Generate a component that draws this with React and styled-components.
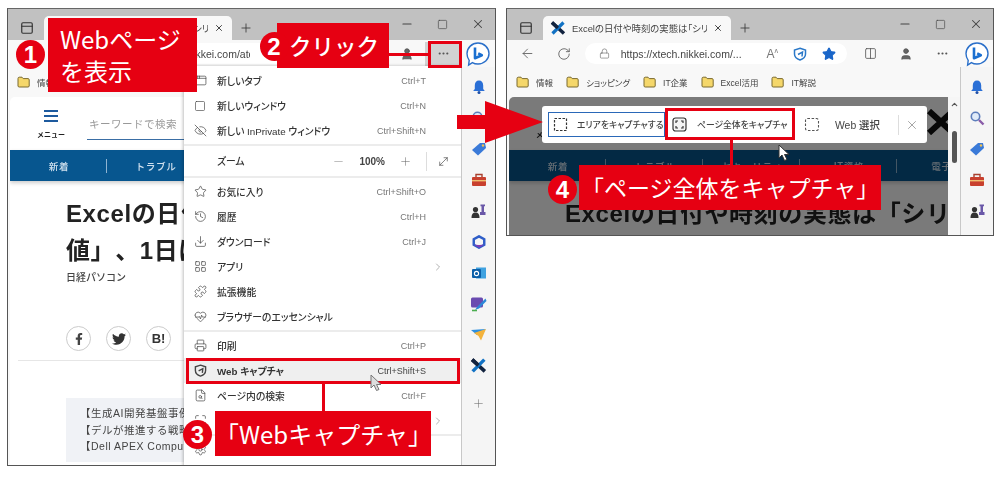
import React from "react";
import styled, { createGlobalStyle } from "styled-components";
import {
	ArrowLeft, RotateCw, Lock, Star, Minus, Square, X, Plus, PanelTop, Columns2, User, MoreHorizontal,
	AppWindow, Maximize, EyeOff, History, Download, LayoutGrid, Puzzle, HeartPulse, Printer, FileSearch, Settings,
	ChevronRight, MoveDiagonal, ChevronUp,
} from "lucide-react";
import { FaFacebookF, FaTwitter } from "react-icons/fa";

const GlobalStyle = createGlobalStyle`
	html, body { margin: 0; padding: 0; background: #fff; }
	* { box-sizing: border-box; }
	body {
		font-family: "Liberation Sans", "Noto Sans CJK JP", sans-serif;
		text-spacing-trim: space-all;
	}
`;

const RED = "#e60012";
const JP = `"Noto Sans CJK JP", "Liberation Sans", sans-serif`;
const LATIN_JP = `"Liberation Sans", "Noto Sans CJK JP", sans-serif`;

const Figure = styled.div`
	position: relative;
	width: 1000px;
	height: 478px;
	display: flex;
	align-items: flex-start;
	gap: 10px;
	padding: 8px 6px 0 7px;
	overflow: hidden;
`;

const Win = styled.div`
	width: ${(p) => p.$w}px;
	height: ${(p) => p.$h}px;
	border: 1px solid #555;
	border-top-color: #666;
	background: #f8f8f8;
	display: flex;
	flex-direction: column;
	overflow: hidden;
	position: relative;
	filter: blur(0.35px);
`;

const TitleBar = styled.div`
	height: 31px;
	flex: none;
	background: #c1c1c1;
	display: flex;
	align-items: flex-end;
	padding-left: 6px;
	color: #333;
`;

const TabToggle = styled.div`
	width: 30px;
	height: 24px;
	padding-right: 5px;
	display: flex;
	align-items: center;
	justify-content: center;
`;

const Tab = styled.div`
	width: 188px;
	height: 24px;
	background: #f8f8f8;
	border-radius: 5px 5px 0 0;
	display: flex;
	align-items: center;
	padding: 0 8px 0 7px;
	gap: 6px;
`;

const TabTitle = styled.span`
	flex: 1;
	font: 400 9.4px ${LATIN_JP};
	font-feature-settings: "palt";
	color: #444;
	white-space: nowrap;
	overflow: hidden;
`;

const NewTab = styled.div`
	width: 28px;
	height: 24px;
	display: flex;
	align-items: center;
	justify-content: center;
`;

const Controls = styled.div`
	margin-left: auto;
	height: 31px;
	display: flex;
	align-items: center;
	padding-right: 10px;
	padding-bottom: 1px;
	gap: 23px;
	color: #444;
`;

const Main = styled.div`
	flex: 1;
	min-height: 0;
	display: flex;
`;

const Column = styled.div`
	width: 453px;
	flex: none;
	display: flex;
	flex-direction: column;
	min-height: 0;
`;

const AddressRow = styled.div`
	height: 27px;
	flex: none;
	display: flex;
	align-items: center;
	padding-left: 12px;
	color: #555;
`;

const NavIcon = styled.div`
	width: 18px;
	display: flex;
	justify-content: center;
	margin-right: ${(p) => p.$gap || 0}px;
`;

const Pill = styled.div`
	width: 264px;
	height: 21px;
	margin-left: 12px;
	background: #fff;
	border-radius: 11px;
	display: flex;
	align-items: center;
	padding-left: 14px;
	gap: 11px;
`;

const Url = styled.span`
	font: 400 10.5px "Liberation Sans", sans-serif;
	color: #444;
	white-space: nowrap;
	margin-left: ${(p) => p.$offset || 0}px;
	width: ${(p) => p.$width}px;
	overflow: hidden;
	flex: none;
`;

const PillTools = styled.div`
	margin-left: auto;
	display: flex;
	align-items: center;
	gap: 15px;
	padding-right: 11px;
`;

const ReadAloud = styled.span`
	font: 400 12px "Liberation Sans", sans-serif;
	color: #777;
	sup { font-size: 7px; }
`;

const RowTools = styled.div`
	margin-left: 5px;
	display: flex;
	align-items: center;
`;

const ToolSlot = styled.div`
	width: 36px;
	height: 24px;
	display: flex;
	align-items: center;
	justify-content: center;
	background: ${(p) => (p.$active ? "#d2d2d2" : "transparent")};
`;

const Bookmarks = styled.div`
	height: 30px;
	flex: none;
	display: flex;
	align-items: center;
	padding-left: 9px;
	font: 400 8.5px ${LATIN_JP};
	font-feature-settings: "palt";
	color: #444;
`;

const Bookmark = styled.span`
	display: flex;
	align-items: center;
	gap: 7px;
	margin-right: 13px;
	white-space: nowrap;
`;

const PageRow = styled.div`
	flex: 1;
	min-height: 0;
	display: flex;
	padding-left: 2px;
`;

const PageView = styled.div`
	flex: 1;
	min-width: 0;
	position: relative;
	background: #fff;
	border-radius: 5px 0 0 0;
	overflow: hidden;
`;

const Dim = styled.div`
	position: absolute;
	inset: 0;
	background: rgba(0, 0, 0, 0.52);
`;

const Scrollbar = styled.div`
	width: 12px;
	flex: none;
	background: #f6f6f6;
	display: flex;
	flex-direction: column;
	align-items: center;
	padding-top: 3px;
	color: #555;
`;

const Thumb = styled.div`
	width: 5px;
	height: 32px;
	margin-top: 22px;
	background: #555;
	border-radius: 3px;
`;

const SiteHeader = styled.div`
	height: 53px;
	display: flex;
	position: relative;
	padding-left: 29px;
`;

const MenuButton = styled.div`
	width: 24px;
	padding-top: 13px;
	display: flex;
	flex-direction: column;
	align-items: center;
	gap: 3px;
	font: 700 7px ${JP};
	color: #222;
	white-space: nowrap;
	span {
		display: block;
		width: 14px;
		height: 2px;
		background: #1d5a9e;
	}
	em { font-style: normal; margin-top: 4px; }
`;

const SearchField = styled.div`
	margin: 18px 0 0 24px;
	width: 300px;
	height: 25px;
	border-bottom: 1.5px solid #3a6ea5;
	padding-left: 2px;
	font: 400 10.5px ${JP};
	letter-spacing: 0.5px;
	color: #999;
	line-height: 18px;
`;

const SiteLogo = styled.svg`
	position: absolute;
	right: -7px;
	top: 12px;
`;

const SiteNav = styled.div`
	height: 31px;
	background: #07568f;
	display: flex;
	align-items: center;
	box-shadow: 0 2px 4px rgba(0, 0, 0, 0.2);
	position: relative;
`;

const SiteNavItem = styled.div`
	width: 97px;
	flex: none;
	text-align: center;
	font: 500 9.6px ${JP};
	letter-spacing: 0.6px;
	color: #cfe0ee;
	border-right: 1px solid #8fb4d2;
	line-height: 14px;
	padding-left: 2px;
	&:last-child { border-right: 0; }
`;

const Article = styled.div`
	padding: 14px 0 0 56px;
`;

const Headline = styled.h1`
	margin: 0;
	font: 700 24px/37px ${LATIN_JP};
	letter-spacing: 0.6px;
	color: #222;
	white-space: nowrap;
`;

const Byline = styled.div`
	margin-top: 1px;
	font: 500 10px/14px ${JP};
	color: #444;
`;

const ShareRow = styled.div`
	margin-top: 42px;
	display: flex;
	gap: 15px;
`;

const ShareButton = styled.div`
	width: 25px;
	height: 25px;
	border-radius: 50%;
	border: 1px solid #ccc;
	display: flex;
	align-items: center;
	justify-content: center;
	font: 700 13px "Liberation Sans", sans-serif;
	color: #333;
`;

const ArticleRule = styled.div`
	margin: 9px 0 0 -48px;
	height: 1px;
	width: 400px;
	background: #e6e6e6;
`;

const Notice = styled.div`
	margin-top: 37px;
	width: 300px;
	height: 64px;
	background: #f0f2f6;
	padding: 7px 0 0 14px;
	font: 400 10.5px/16.5px ${LATIN_JP};
	color: #444;
	letter-spacing: 0.5px;
	white-space: nowrap;
`;

const Sidebar = styled.div`
	flex: 1;
	background: #f5f5f5;
	position: relative;
	display: flex;
	flex-direction: column;
	align-items: center;
`;

const BingSlot = styled.div`
	height: 27px;
	flex: none;
	background: #f8f8f8;
	align-self: stretch;
	display: flex;
	align-items: center;
	justify-content: center;
`;

const SidePanel = styled.div`
	flex: 1;
	align-self: stretch;
	border-left: 1px solid #c8c8c8;
	display: flex;
	flex-direction: column;
	align-items: center;
	padding-top: 10px;
	gap: 12px;
`;

const SideIcon = styled.div`
	width: 20px;
	height: 19px;
	display: flex;
	align-items: center;
	justify-content: center;
	margin-top: ${(p) => p.$push || 0}px;
`;

const MoreMenu = styled.div`
	position: absolute;
	left: 176px;
	top: 57px;
	width: 278px;
	height: 410px;
	background: #fff;
	box-shadow: -1px 0 3px rgba(0, 0, 0, 0.25);
	padding-top: 2px;
	display: flex;
	flex-direction: column;
`;

const MenuRow = styled.div`
	height: 25px;
	flex: none;
	display: flex;
	align-items: center;
	padding: 0 36px 0 9px;
	background: ${(p) => (p.$active ? "#efefef" : "transparent")};
	color: #333;
`;

const MenuIcon = styled.div`
	width: 14px;
	display: flex;
	justify-content: center;
	margin-right: 10px;
	color: #444;
`;

const MenuLabel = styled.span`
	font: ${(p) => (p.$active ? 700 : 500)} 9.8px ${LATIN_JP};
	font-feature-settings: "palt";
	white-space: nowrap;
`;

const Shortcut = styled.span`
	margin-left: auto;
	font: 400 9px "Liberation Sans", sans-serif;
	color: #777;
	${(p) => p.$active && "color: #444;"}
`;

const MenuChevron = styled.span`
	margin-left: auto;
	margin-right: -18px;
	color: #888;
	display: flex;
`;

const MenuRule = styled.div`
	height: 2px;
	flex: none;
	margin: ${(p) => p.$m || "0"};
	background: #ececec;
`;

const ZoomRow = styled.div`
	height: 30px;
	flex: none;
	display: flex;
	align-items: center;
	padding: 0 12px 0 33px;
	font: 500 9.8px ${LATIN_JP};
	font-feature-settings: "palt";
	color: #333;
`;

const ZoomTools = styled.div`
	margin-left: auto;
	display: flex;
	align-items: center;
	gap: 14px;
	font: 700 10px "Liberation Sans", sans-serif;
	color: #444;
`;

const ZoomFit = styled.div`
	padding: 3px 0 3px 10px;
	border-left: 1px solid #ddd;
	display: flex;
`;

const CaptureBar = styled.div`
	position: absolute;
	left: 33px;
	top: 9px;
	width: 385px;
	height: 37px;
	background: #fff;
	border-radius: 3px;
	display: flex;
	align-items: center;
	padding-left: 6px;
	font: 500 8.8px ${LATIN_JP};
	font-feature-settings: "palt";
	color: #444;
`;

const CaptureOption = styled.div`
	width: ${(p) => p.$w}px;
	height: 25px;
	flex: none;
	display: flex;
	align-items: center;
	gap: ${(p) => p.$gap}px;
	padding-left: ${(p) => p.$pad}px;
	border: ${(p) => (p.$selected ? "1.5px solid #2a68b8" : "0")};
	white-space: nowrap;
	${(p) => p.$large && "font-size: 10.4px;"}
	svg { flex: none; }
`;

const CaptureClose = styled.div`
	margin-left: 2px;
	padding: 3px 0 3px 6px;
	border-left: 1px solid #ddd;
	display: flex;
	color: #666;
`;

const Callout = styled.div`
	position: absolute;
	left: ${(p) => p.$x}px;
	top: ${(p) => p.$y}px;
	width: ${(p) => p.$w}px;
	height: ${(p) => p.$h}px;
	background: ${RED};
	color: #fff;
	font: ${(p) => p.$weight || 400} ${(p) => p.$size}px/${(p) => p.$line || p.$h}px ${JP};
	padding-left: ${(p) => p.$pad || 0}px;
	padding-top: ${(p) => p.$top || 0}px;
	white-space: nowrap;
`;

const StepBadge = styled.div`
	position: absolute;
	left: ${(p) => p.$x - 14.5}px;
	top: ${(p) => p.$y - 14.5}px;
	width: 29px;
	height: 29px;
	border-radius: 50%;
	background: ${RED};
	color: #fff;
	font: 700 24px/29px "Liberation Sans", sans-serif;
	text-align: center;
`;

const Frame = styled.div`
	position: absolute;
	left: ${(p) => p.$x}px;
	top: ${(p) => p.$y}px;
	width: ${(p) => p.$w}px;
	height: ${(p) => p.$h}px;
	border: 3.5px solid ${RED};
`;

const Leader = styled.div`
	position: absolute;
	left: ${(p) => p.$x}px;
	top: ${(p) => p.$y}px;
	width: ${(p) => p.$w}px;
	height: ${(p) => p.$h}px;
	background: ${RED};
`;

const Overlay = styled.svg`
	position: absolute;
	left: ${(p) => p.$x}px;
	top: ${(p) => p.$y}px;
`;

const Folder = () => (
	<svg width="13" height="12" viewBox="0 0 13 12">
		<path d="M1 2.5C1 1.7 1.5 1.2 2.2 1.2H5L6.2 2.6H11C11.7 2.6 12.2 3.1 12.2 3.8V10C12.2 10.6 11.7 11 11 11H2.2C1.5 11 1 10.6 1 10Z" fill="#f5d76a" stroke="#7a6a30" strokeWidth="1" />
	</svg>
);

const XLogo = ({ size = 16 }) => (
	<svg width={size} height={size} viewBox="0 0 16 16">
		<path d="M2 2.5L14 13.5" stroke="#12233f" strokeWidth="3.4" />
		<path d="M13.5 2.5L2.5 13.5" stroke="#1272c4" strokeWidth="3.2" />
		<path d="M2 2.5L14 13.5" stroke="#12233f" strokeWidth="3.4" strokeDasharray="8 20" />
	</svg>
);

const Bing = () => (
	<svg width="26" height="26" viewBox="0 0 26 26">
		<path d="M13 2C19 2 24 6.8 24 12.6C24 18.6 19 23 13 23C11 23 9 22.6 7.4 21.6L3.6 24L4.2 19.4C2.8 17.6 2 15.2 2 12.6C2 6.8 7 2 13 2Z" fill="#fff" stroke="#2a6fc9" strokeWidth="1.4" />
		<path d="M10 6.5V17.2L16.8 14.2L13.2 12.4" fill="none" stroke="#1a6fd0" strokeWidth="2.6" strokeLinejoin="round" />
	</svg>
);

const ShieldCapture = ({ color = "#2a78c8", size = 14 }) => (
	<svg width={size} height={size} viewBox="0 0 14 14" fill="none" stroke={color} strokeWidth="1.5">
		<path d="M7 1.2L12.5 3V7C12.5 10 10 12 7 13C4 12 1.5 10 1.5 7V3Z" />
		<path d="M5 7.5L9.5 5L9 9.5" />
	</svg>
);

const SIDE_ICONS = [
	<svg key="bell" width="16" height="16" viewBox="0 0 16 16"><path d="M8 1.5C5.2 1.5 3.8 3.6 3.8 6.5V10L2.2 12H13.8L12.2 10V6.5C12.2 3.6 10.8 1.5 8 1.5Z" fill="#2a6fd6" /><circle cx="8" cy="13.6" r="1.5" fill="#1d4fa8" /></svg>,
	<svg key="search" width="16" height="16" viewBox="0 0 16 16"><circle cx="6.5" cy="6.5" r="4.2" fill="#dfeaf8" stroke="#5c7dbb" strokeWidth="1.6" /><path d="M10 10L14.5 14.5" stroke="#8a5ca8" strokeWidth="2.4" /></svg>,
	<svg key="tag" width="18" height="16" viewBox="0 0 18 16"><path d="M2 9L10 2H15L16 7L8 14.5Z" fill="#3a7ad8" /><circle cx="13" cy="4.5" r="1.2" fill="#f2c14e" /></svg>,
	<svg key="box" width="16" height="15" viewBox="0 0 16 15"><rect x="1" y="5" width="14" height="9" rx="1" fill="#c8402e" /><path d="M5 5V2.5H11V5" fill="none" stroke="#a8402e" strokeWidth="1.4" /><rect x="1" y="8" width="14" height="1.4" fill="#f0c070" /></svg>,
	<svg key="chess" width="17" height="16" viewBox="0 0 17 16"><circle cx="5.5" cy="6.5" r="2.6" fill="#333" /><path d="M1.5 15C1.5 11 3 9.5 5.5 9.5S9.5 11 9.5 15Z" fill="#333" /><path d="M10.5 1.5H15V3.2H14V9H15.5V12H10V9H11.5V3.2H10.5Z" fill="#6a58a8" /></svg>,
	<svg key="office" width="14" height="14" viewBox="0 0 16 16"><path d="M8 1.5L14 4.8V11.2L8 14.5L2 11.2V4.8Z" fill="none" stroke="#2f5ec8" strokeWidth="2.8" /><path d="M8 11.5L14 11.2L8 14.5L2 11.2Z" fill="#7b3fb8" /></svg>,
	<svg key="outlook" width="16" height="16" viewBox="0 0 16 16"><rect x="5" y="2.5" width="10" height="11" fill="#3fa2e0" /><rect x="1" y="4" width="9" height="9" rx="1" fill="#0b5fa8" /><circle cx="5.5" cy="8.5" r="2.1" fill="none" stroke="#fff" strokeWidth="1.1" /></svg>,
	<svg key="pen" width="17" height="16" viewBox="0 0 17 16"><rect x="1" y="1.5" width="12" height="10" rx="1.5" fill="#6a4bb0" /><path d="M15.5 2.5L7 11L5 14L9 12.5L16.5 5Z" fill="#2d88d8" /><path d="M2 14.5H7" stroke="#4cae50" strokeWidth="1.6" /></svg>,
	<svg key="send" width="17" height="14" viewBox="0 0 17 14"><path d="M1 2L16 1L7 7Z" fill="#2d8fe0" /><path d="M4 5L16 1L11 12.5L8.5 8Z" fill="#f3b33d" /></svg>,
	<XLogo key="x" size={17} />,
];

const BrowserChrome = ({ w, h, urlOffset, urlWidth, urlText, menuOpen, labelled, children }) => (
	<Win $w={w} $h={h}>
		<TitleBar>
			<TabToggle><PanelTop size={14} strokeWidth={2} /></TabToggle>
			<Tab>
				<XLogo />
				<TabTitle>Excelの日付や時刻の実態は「シリア</TabTitle>
				<X size={10} strokeWidth={2.2} />
			</Tab>
			<NewTab><Plus size={14} strokeWidth={1.4} /></NewTab>
			<Controls>
				<Minus size={14} strokeWidth={1.8} />
				<Square size={11} strokeWidth={1.4} />
				<X size={14} strokeWidth={1.8} />
			</Controls>
		</TitleBar>
		<Main>
			<Column>
				<AddressRow>
					<NavIcon $gap={18}><ArrowLeft size={15} strokeWidth={1.3} /></NavIcon>
					<NavIcon><RotateCw size={14} strokeWidth={1.4} /></NavIcon>
					<Pill>
						<Lock size={11} strokeWidth={1.2} />
						<Url $offset={urlOffset} $width={urlWidth}>{urlText}</Url>
						<PillTools>
							<ReadAloud>A<sup>ʌ</sup></ReadAloud>
							<ShieldCapture />
							<Star size={14} fill="#1a66c9" stroke="#1a66c9" />
						</PillTools>
					</Pill>
					<RowTools>
						<ToolSlot><Columns2 size={13} strokeWidth={1.5} /></ToolSlot>
						<ToolSlot><User size={14} fill="#666" strokeWidth={1.5} /></ToolSlot>
						<ToolSlot $active={menuOpen}><MoreHorizontal size={13} /></ToolSlot>
					</RowTools>
				</AddressRow>
				<Bookmarks>
					{labelled.map((label) => (
						<Bookmark key={label}><Folder />{label}</Bookmark>
					))}
				</Bookmarks>
				<PageRow>{children}</PageRow>
			</Column>
			<Sidebar>
				<BingSlot><Bing /></BingSlot>
				<SidePanel>
					{SIDE_ICONS.map((icon) => <SideIcon key={icon.key}>{icon}</SideIcon>)}
					<SideIcon $push={7}><Plus size={13} strokeWidth={1} color="#666" /></SideIcon>
				</SidePanel>
			</Sidebar>
		</Main>
	</Win>
);

const SitePage = ({ dimmed, children }) => (
	<PageView>
		<SiteHeader>
			<MenuButton><span /><span /><span /><em>メニュー</em></MenuButton>
			<SearchField>キーワードで検索</SearchField>
			<SiteLogo width="28" height="26" viewBox="0 0 28 26">
				<path d="M2 2L26 24M26 2L2 24" stroke="#111" strokeWidth="6" />
			</SiteLogo>
		</SiteHeader>
		<SiteNav>
			{["新着", "トラブル", "セキュリティ", "IT資格", "電子版"].map((item) => (
				<SiteNavItem key={item}>{item}</SiteNavItem>
			))}
		</SiteNav>
		<Article>
			<Headline>Excelの日付や時刻の実態は「シリアル<br />値」、1日は「1」</Headline>
			<Byline>日経パソコン</Byline>
			<ShareRow>
				<ShareButton><FaFacebookF size={12} color="#444" /></ShareButton>
				<ShareButton><FaTwitter size={14} color="#333" /></ShareButton>
				<ShareButton>B!</ShareButton>
			</ShareRow>
			<ArticleRule />
			<Notice>
				【生成AI開発基盤事例】<br />
				【デルが推進する戦略】<br />
				【Dell APEX Compute】
			</Notice>
		</Article>
		{dimmed && <Dim />}
		{children}
	</PageView>
);

const MENU_TOP = [
	{ icon: <AppWindow size={13} strokeWidth={1.3} />, label: "新しいタブ", keys: "Ctrl+T" },
	{ icon: <Square size={12} strokeWidth={1.3} />, label: "新しいウィンドウ", keys: "Ctrl+N" },
	{ icon: <EyeOff size={13} strokeWidth={1.3} />, label: "新しい InPrivate ウィンドウ", keys: "Ctrl+Shift+N" },
];

const MENU_MIDDLE = [
	{ icon: <Star size={13} strokeWidth={1.3} />, label: "お気に入り", keys: "Ctrl+Shift+O" },
	{ icon: <History size={13} strokeWidth={1.3} />, label: "履歴", keys: "Ctrl+H" },
	{ icon: <Download size={13} strokeWidth={1.3} />, label: "ダウンロード", keys: "Ctrl+J" },
	{ icon: <LayoutGrid size={13} strokeWidth={1.3} />, label: "アプリ", more: true },
	{ icon: <Puzzle size={13} strokeWidth={1.3} />, label: "拡張機能" },
	{ icon: <HeartPulse size={13} strokeWidth={1.3} />, label: "ブラウザーのエッセンシャル" },
];

const MENU_BOTTOM = [
	{ icon: <Printer size={13} strokeWidth={1.3} />, label: "印刷", keys: "Ctrl+P" },
	{ icon: <ShieldCapture color="#444" size={13} />, label: "Web キャプチャ", keys: "Ctrl+Shift+S", active: true },
	{ icon: <FileSearch size={13} strokeWidth={1.3} />, label: "ページ内の検索", keys: "Ctrl+F" },
	{ icon: <Maximize size={13} strokeWidth={1.3} />, label: "その他のツール", more: true },
];

const Row = ({ item }) => (
	<MenuRow $active={item.active}>
		<MenuIcon>{item.icon}</MenuIcon>
		<MenuLabel $active={item.active}>{item.label}</MenuLabel>
		{item.keys && <Shortcut $active={item.active}>{item.keys}</Shortcut>}
		{item.more && <MenuChevron><ChevronRight size={12} strokeWidth={1.3} /></MenuChevron>}
	</MenuRow>
);

const Pointer = ({ x, y, fill, stroke }) => (
	<Overlay $x={x} $y={y} width="13" height="18" viewBox="0 0 13 18">
		<path d="M1 1V14L4 11L6.5 16.5L9 15.5L6.5 10.5H11Z" fill={fill} stroke={stroke} strokeWidth="1" />
	</Overlay>
);

const App = () => (
	<>
		<GlobalStyle />
		<Figure>
			<BrowserChrome
				w={489}
				h={458}
				urlOffset={6}
				urlWidth={122}
				urlText="https://xtech.nikkei.com/atcl/nxt"
				menuOpen
				labelled={["情報", "ショッピング"]}
			>
				<SitePage />
				<Scrollbar />
				<MoreMenu>
					{MENU_TOP.map((item) => <Row key={item.label} item={item} />)}
					<MenuRule $m="1px 0 0" />
					<ZoomRow>
						ズーム
						<ZoomTools>
							<Minus size={13} strokeWidth={1} color="#888" />
							100%
							<Plus size={13} strokeWidth={1} color="#666" />
							<ZoomFit><MoveDiagonal size={13} strokeWidth={1.2} /></ZoomFit>
						</ZoomTools>
					</ZoomRow>
					<MenuRule $m="0 0 1px" />
					{MENU_MIDDLE.map((item) => <Row key={item.label} item={item} />)}
					<MenuRule $m="1px 0 1px" />
					{MENU_BOTTOM.map((item) => <Row key={item.label} item={item} />)}
					<MenuRule $m="1px 0 1px" />
					<Row item={{ icon: <Settings size={13} strokeWidth={1.3} />, label: "設定" }} />
				</MoreMenu>
			</BrowserChrome>
			<BrowserChrome
				w={488}
				h={228}
				urlWidth={120}
				urlText="https://xtech.nikkei.com/..."
				labelled={["情報", "ショッピング", "IT企業", "Excel活用", "IT解説"]}
			>
				<SitePage dimmed>
					<CaptureBar>
						<CaptureOption $w={117} $pad={4} $gap={9} $selected>
							<svg width="15" height="15" viewBox="0 0 15 15" fill="none" stroke="#333" strokeWidth="1.2" strokeDasharray="2.5 1.5"><rect x="1.5" y="1.5" width="12" height="12" /></svg>
							エリアをキャプチャする
						</CaptureOption>
						<CaptureOption $w={131} $pad={7} $gap={10}>
							<svg width="15" height="15" viewBox="0 0 15 15" fill="#f4f4f4" stroke="#333" strokeWidth="1.2"><rect x="1" y="1" width="13" height="13" rx="2.5" /><path d="M4 6V4H6M9 4H11V6M11 9V11H9M6 11H4V9" fill="none" /></svg>
							ページ全体をキャプチャ
						</CaptureOption>
						<CaptureOption $w={100} $pad={8} $gap={15} $large>
							<svg width="16" height="15" viewBox="0 0 16 15" fill="none" stroke="#555" strokeWidth="1.1" strokeDasharray="2.5 1.6"><rect x="1.5" y="1.5" width="13" height="12" rx="2" /></svg>
							Web 選択
						</CaptureOption>
						<CaptureClose><X size={14} strokeWidth={1} /></CaptureClose>
					</CaptureBar>
				</SitePage>
				<Scrollbar>
					<ChevronUp size={9} strokeWidth={3} />
					<Thumb />
				</Scrollbar>
			</BrowserChrome>

			<Frame $x={428} $y={41} $w={34} $h={27} />
			<Leader $x={389} $y={52.5} $w={40} $h={3} />
			<Callout $x={277} $y={23} $w={112} $h={45} $size={22.5} $pad={12} $weight={500}>クリック</Callout>
			<StepBadge $x={274} $y={46}>2</StepBadge>

			<Callout $x={48} $y={18} $w={149} $h={74} $size={24} $line={32} $pad={12} $top={5}>
				Webページ<br />を表示
			</Callout>
			<StepBadge $x={30.5} $y={54.5}>1</StepBadge>

			<Frame $x={186} $y={358} $w={274} $h={26} />
			<Pointer x={370} y={374} fill="#ddd" stroke="#777" />
			<Leader $x={321.5} $y={384} $w={3} $h={27} />
			<Callout $x={215} $y={411} $w={216} $h={45} $size={24}>「Webキャプチャ」</Callout>
			<StepBadge $x={197.5} $y={434}>3</StepBadge>

			<Overlay $x={457} $y={98} width="90" height="48" viewBox="0 0 90 48">
				<path d="M0 17H28V3L86 24L28 45V31H0Z" fill={RED} />
			</Overlay>

			<Frame $x={665} $y={108} $w={130} $h={32} />
			<Pointer x={778} y={144} fill="#fff" stroke="#333" />
			<Leader $x={729.5} $y={140} $w={3} $h={25} />
			<Callout $x={579} $y={165} $w={302} $h={45} $size={23} $pad={2}>「ページ全体をキャプチャ」</Callout>
			<StepBadge $x={562.5} $y={189.5}>4</StepBadge>
		</Figure>
	</>
);

export default App;
